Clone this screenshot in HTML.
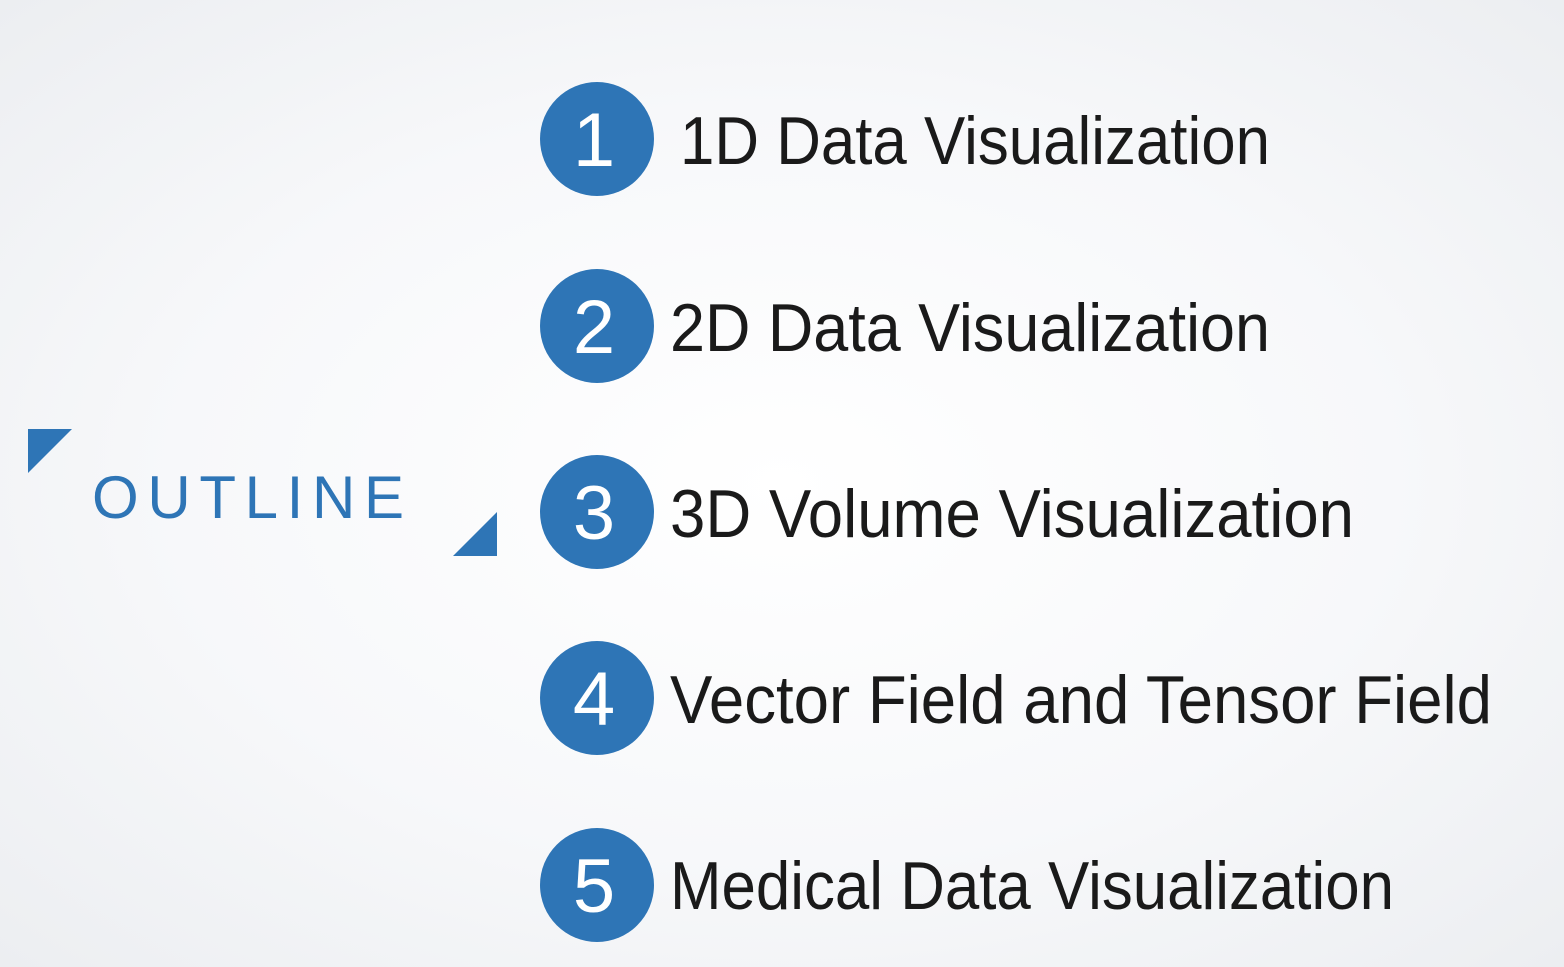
<!DOCTYPE html>
<html><head><style>
html,body{margin:0;padding:0}
body{width:1564px;height:967px;overflow:hidden;background:radial-gradient(ellipse at 50% 50%,#ffffff 0%,#f7f8fa 55%,#eceef1 100%)}
svg{display:block}
</style></head><body>
<svg width="1564" height="967" xmlns="http://www.w3.org/2000/svg" font-family="Liberation Sans, sans-serif">
<polygon points="28,429 72,429 28,473" fill="#2E75B6"/>
<polygon points="497,512 497,556 453,556" fill="#2E75B6"/>
<text x="92" y="518" font-size="60" fill="#2E75B6" textLength="312" lengthAdjust="spacing">OUTLINE</text>
<g fill="#2E75B6">
<circle cx="597" cy="139" r="57"/><circle cx="597" cy="326" r="57"/><circle cx="597" cy="512" r="57"/><circle cx="597" cy="698" r="57"/><circle cx="597" cy="885" r="57"/>
</g>
<g fill="#fff" font-size="76" text-anchor="middle">
<text x="594" y="166">1</text><text x="594" y="353">2</text><text x="594" y="539">3</text><text x="594" y="725">4</text><text x="594" y="912">5</text>
</g>
<g fill="#1a1a1a" font-size="68">
<text x="680" y="164" textLength="590" lengthAdjust="spacingAndGlyphs">1D Data Visualization</text>
<text x="670" y="351" textLength="600" lengthAdjust="spacingAndGlyphs">2D Data Visualization</text>
<text x="670" y="537" textLength="684" lengthAdjust="spacingAndGlyphs">3D Volume Visualization</text>
<text x="670" y="723" textLength="822" lengthAdjust="spacingAndGlyphs">Vector Field and Tensor Field</text>
<text x="670" y="909" textLength="724" lengthAdjust="spacingAndGlyphs">Medical Data Visualization</text>
</g>
</svg>
</body></html>
